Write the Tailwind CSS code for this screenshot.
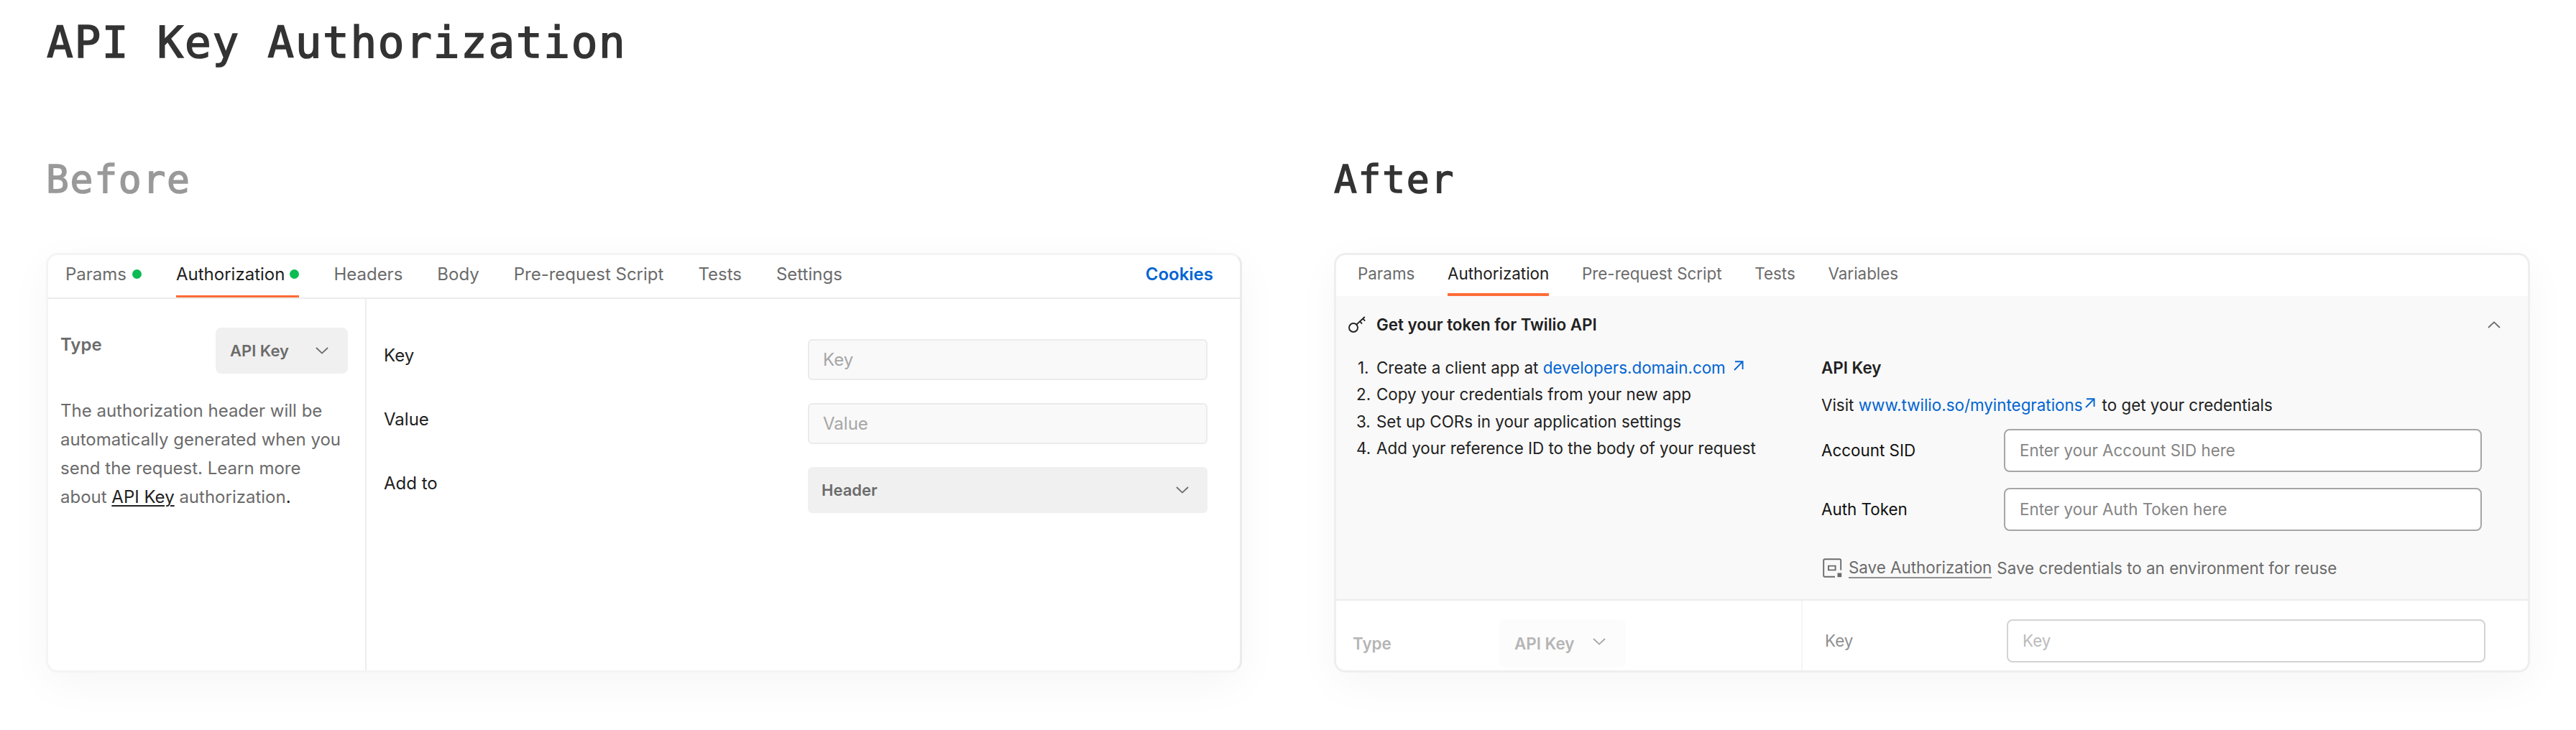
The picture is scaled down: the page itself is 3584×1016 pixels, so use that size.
<!DOCTYPE html>
<html lang="en">
<head>
<meta charset="utf-8">
<title>API Key Authorization</title>
<script src="https://cdn.jsdelivr.net/npm/@tailwindcss/browser@4"></script>
</head>
<body class="w-[3584px] h-[1016px] overflow-hidden bg-white font-['Inter',sans-serif] text-[#212121]">
<h1 class="pt-[27px] pl-[65px] h-[218px] font-['DejaVu_Sans_Mono',monospace] text-[61px] leading-[64px] tracking-[1.68px] text-[#333] whitespace-nowrap [-webkit-text-stroke:1.6px_#333]">API Key Authorization</h1>
<main class="flex gap-32 pl-16">

  <!-- Before -->
  <section class="w-[1664px]">
    <h2 class="h-[134px] font-['DejaVu_Sans_Mono',monospace] text-[53px] leading-[64px] tracking-[1.69px] text-[#999] [-webkit-text-stroke:1.4px_#999]">Before</h2>
    <div class="h-[584px] rounded-2xl border-[3px] border-[#f4f4f4] border-r-[#ebebeb] bg-white shadow-[0_16px_60px_rgba(0,0,0,0.04)] text-[24px] flex flex-col">
      <nav class="flex h-[61px] shrink-0 gap-12 border-b-2 border-[#ececec] pl-6 pr-[37px] leading-[53px] text-[#6b6b6b] whitespace-nowrap">
        <div class="flex gap-2">Params<span class="mt-5 size-[13px] rounded-full bg-[#0cbb52]"></span></div>
        <div class="flex h-[59px] gap-[7px] border-b-[3px] border-[#ff6c37] text-[#212121]">Authorization<span class="mt-5 size-[13px] rounded-full bg-[#0cbb52]"></span></div>
        <div>Headers</div>
        <div>Body</div>
        <div>Pre-request Script</div>
        <div>Tests</div>
        <div>Settings</div>
        <div class="ml-auto font-semibold text-[#0265d2]">Cookies</div>
      </nav>
      <div class="flex grow">
        <div class="w-[443px] shrink-0 border-r-2 border-[#ededed] pl-[17px] pt-10 text-[#6b6b6b]">
          <div class="flex justify-between pr-6">
            <div class="pt-2 font-semibold leading-8">Type</div>
            <div class="flex h-16 w-[184px] items-center justify-between rounded-lg bg-[#f0f0f0] pl-5 pr-[27px] text-[22px] font-semibold">API Key
              <svg class="h-[10px] w-[18px]" viewBox="0 0 18 10" fill="none" stroke="#6b6b6b" stroke-width="1.8"><path d="M1 1L9 8.6L17 1"/></svg>
            </div>
          </div>
          <p class="mt-8 leading-10 whitespace-nowrap">The authorization header will be<br>automatically generated when you<br>send the request. Learn more<br>about <a class="text-[#212121] underline decoration-2 underline-offset-[3px]">API Key</a> authorization<span class="text-[#212121]">.</span></p>
        </div>
        <div class="flex grow flex-col gap-8 pl-6 pr-[45px] pt-14">
          <div class="flex h-[57px] justify-between"><span class="leading-[45px]">Key</span><div class="flex w-[556px] items-center rounded-md border-2 border-[#ebebeb] bg-[#f9f9f9] pl-[19px] text-[#a6a6a6]">Key</div></div>
          <div class="flex h-[57px] justify-between"><span class="leading-[45px]">Value</span><div class="flex w-[556px] items-center rounded-md border-2 border-[#ebebeb] bg-[#f9f9f9] pl-[19px] text-[#a6a6a6]">Value</div></div>
          <div class="flex h-16 justify-between"><span class="leading-[45px]">Add to</span>
            <div class="flex w-[556px] items-center justify-between rounded-md bg-[#f0f0f0] pl-[19px] pr-[26px] text-[22px] font-semibold text-[#6b6b6b]">Header
              <svg class="h-[10px] w-[18px]" viewBox="0 0 18 10" fill="none" stroke="#6b6b6b" stroke-width="1.8"><path d="M1 1L9 8.6L17 1"/></svg>
            </div>
          </div>
        </div>
      </div>
    </div>
  </section>

  <!-- After -->
  <section class="w-[1664px]">
    <h2 class="h-[134px] font-['DejaVu_Sans_Mono',monospace] text-[53px] leading-[64px] tracking-[1.69px] text-[#333] [-webkit-text-stroke:1.4px_#333]">After</h2>
    <div class="h-[584px] rounded-2xl border-[3px] border-[#eeeeee] bg-white shadow-[0_16px_60px_rgba(0,0,0,0.04)] text-[22.4px] flex flex-col">
      <nav class="flex h-[57px] shrink-0 gap-[45.7px] pl-[30px] leading-[52px] text-[#6b6b6b] whitespace-nowrap">
        <div>Params</div>
        <div class="border-b-4 border-[#ff6c37] text-[#212121]">Authorization</div>
        <div>Pre-request Script</div>
        <div>Tests</div>
        <div>Variables</div>
      </nav>
      <div class="h-[424px] shrink-0 border-b-2 border-[#ececec] bg-[#f9f9f9]">
        <div class="flex h-[80px] items-center pl-[17px] pr-[38px] font-semibold">
          <svg class="size-6" viewBox="0 0 24 24" fill="none" stroke="#212121" stroke-width="1.9"><circle cx="7" cy="16" r="6"/><path d="M11.4 11.6L22.8 1M20 3.4L23.2 6.6M16 7.2L19 10.6"/></svg>
          <span class="ml-[15px]">Get your token for Twilio API</span>
          <svg class="ml-auto h-[10px] w-[18px]" viewBox="0 0 18 10" fill="none" stroke="#6b6b6b" stroke-width="1.8"><path d="M1 9L9 1.4L17 9"/></svg>
        </div>
        <div class="mt-px flex whitespace-nowrap">
          <ol class="w-[675px] pl-7 leading-[37.3px]">
            <li class="flex"><span class="w-7 pl-[2px]">1.</span><span>Create a client app at <a class="text-[#0265d2]">developers.domain.com</a></span><svg class="ml-[11px] mt-[9px] size-[14px]" viewBox="0 0 14 14" fill="none" stroke="#0265d2" stroke-width="1.9"><path d="M2 1.2H12.6V12M12.6 1.2L1 13"/></svg></li>
            <li class="flex"><span class="w-7">2.</span>Copy your credentials from your new app</li>
            <li class="flex"><span class="w-7">3.</span>Set up CORs in your application settings</li>
            <li class="flex"><span class="w-7">4.</span>Add your reference ID to the body of your request</li>
          </ol>
          <div class="grow pr-16">
            <div class="h-[52px] font-semibold leading-[37.3px]">API Key</div>
            <div class="flex h-[52px] leading-[37.3px]"><span class="whitespace-pre">Visit </span><a class="text-[#0265d2]">www.twilio.so/myintegrations</a><svg class="ml-[3px] mr-[10px] mt-[9px] size-[14px]" viewBox="0 0 14 14" fill="none" stroke="#0265d2" stroke-width="1.9"><path d="M2 1.2H12.6V12M12.6 1.2L1 13"/></svg>to get your credentials</div>
            <div class="flex h-[60px] items-center justify-between text-[#111]">Account SID<div class="flex h-[60px] w-[665px] items-center rounded-lg border-2 border-[#a6a6a6] bg-white pl-[20px] text-[#858585]">Enter your Account SID here</div></div>
            <div class="mt-[22px] flex h-[60px] items-center justify-between text-[#111]">Auth Token<div class="flex h-[60px] w-[665px] items-center rounded-lg border-2 border-[#a6a6a6] bg-white pl-[20px] text-[#858585]">Enter your Auth Token here</div></div>
            <div class="mt-[37px] flex items-center pl-[2px] leading-7 text-[#6b6b6b]">
              <svg class="h-[27px] w-[27px]" viewBox="0 0 27 27" fill="none" stroke="#6b6b6b" stroke-width="1.9"><path d="M25.2 16.5V3Q25.2 1.2 23.4 1.2H3Q1.2 1.2 1.2 3V24Q1.2 25.8 3 25.8H17"/><path d="M8 10.6H17.6V16.4H8Z"/><path fill="#6b6b6b" stroke="none" d="M20.5 20.5H26.2V26.2H20.5Z"/></svg>
              <span class="ml-[9px] h-[29px] border-b-2 border-[#8f8f8f]">Save Authorization</span><span class="ml-[7px]">Save credentials to an environment for reuse</span>
            </div>
          </div>
        </div>
      </div>
      <div class="flex grow">
        <div class="flex w-[649px] shrink-0 border-r-2 border-[#f5f5f5] pl-[23px] pt-[26px] font-semibold text-[#b5b5b5]">
          <div class="w-[204px] leading-[67px]">Type</div>
          <div class="flex h-[67px] w-[176px] rounded-lg bg-[#fcfcfc] pl-[21px] leading-[67px] whitespace-nowrap">API Key
            <svg class="ml-[26px] mt-[26px] h-[10px] w-[18px]" viewBox="0 0 18 10" fill="none" stroke="#a6a6a6" stroke-width="1.8"><path d="M1 1L9 8.6L17 1"/></svg>
          </div>
        </div>
        <div class="flex grow justify-between pl-[31px] pr-[59px] pt-[26px] leading-[59px] text-[#8f8f8f]">Key<div class="h-[60px] w-[666px] rounded-lg border-2 border-[#d3d3d3] pl-[20px] leading-[55px] text-[#bbb]">Key</div></div>
      </div>
    </div>
  </section>
</main>
</body>
</html>
